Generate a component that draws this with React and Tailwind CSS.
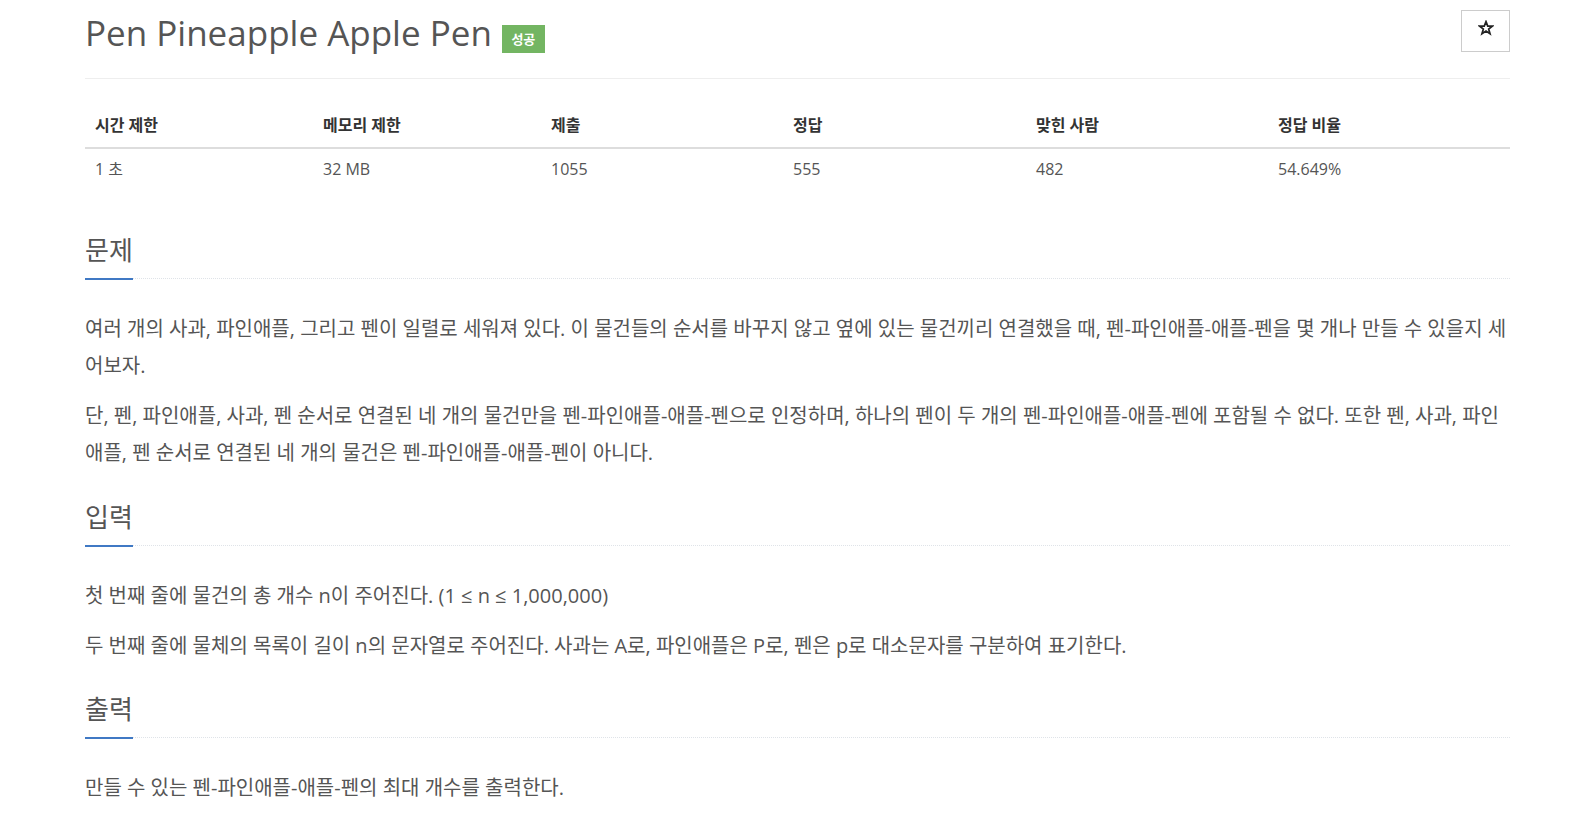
import React from "react";

const FONT = { fontFamily: '"Open Sans", "Noto Sans CJK KR", sans-serif' };

function Headline({ children }) {
  return (
    <div className="flex border-b border-dotted border-[#dfe3e8] mb-[31px]">
      <h2 className="text-[26px] leading-[30px] font-normal text-[#555] pb-[13px] border-b-2 border-[#4079c4] -mb-[2px]">
        {children}
      </h2>
    </div>
  );
}

function P({ children }) {
  return <p className="text-[20px] leading-[37px] text-[#555] mb-[13px]">{children}</p>;
}

export default function App() {
  const heads = ["시간 제한", "메모리 제한", "제출", "정답", "맞힌 사람", "정답 비율"];
  const vals = ["1 초", "32 MB", "1055", "555", "482", "54.649%"];
  const widths = ["w-[228px]", "w-[228px]", "w-[242px]", "w-[243px]", "w-[242px]", "w-[242px]"];
  return (
    <div className="bg-white min-h-[823px]" style={FONT}>
      <div className="ml-[85px] w-[1425px]">
        <div className="flex justify-between items-start pt-[10px] pb-[25px] border-b border-[#eee]">
          <h1 className="flex items-center mt-[2px] text-[35px] leading-[36px] font-normal text-[#555]">
            <span>Pen Pineapple Apple Pen</span>
            <span className="ml-[10px] mt-[13px] w-[43px] h-[28px] flex items-center justify-center bg-[#73b562] text-white text-[13px] font-bold">
              성공
            </span>
          </h1>
          <button className="w-[49px] h-[42px] border border-[#ccc] bg-white flex items-center justify-center pb-[6px]">
            <svg width="16" height="16" viewBox="0 0 24 24" fill="none" stroke="#222" strokeWidth="2.6" strokeLinejoin="miter">
              <polygon points="12,2.5 14.6,9.2 21.6,9.2 16,13.6 18,20.6 12,16.4 6,20.6 8,13.6 2.4,9.2 9.4,9.2" />
            </svg>
          </button>
        </div>

        <table className="mt-[28px] w-[1425px] border-collapse table-fixed">
          <thead>
            <tr>
              {heads.map((h, i) => (
                <th key={h} className={`${widths[i]} text-left px-[10px] pt-[8px] pb-[12px] text-[16px] leading-[20px] font-bold text-[#333] border-b-2 border-[#ddd]`}>
                  {h}
                </th>
              ))}
            </tr>
          </thead>
          <tbody>
            <tr>
              {vals.map((v) => (
                <td key={v} className="px-[10px] pt-[10px] pb-[8px] text-[16px] leading-[20px] text-[#555]">
                  {v}
                </td>
              ))}
            </tr>
          </tbody>
        </table>

        <section className="mt-[48px]">
          <Headline>문제</Headline>
          <P>
            여러 개의 사과, 파인애플, 그리고 펜이 일렬로 세워져 있다. 이 물건들의 순서를 바꾸지 않고 옆에 있는 물건끼리 연결했을 때, 펜-파인애플-애플-펜을 몇 개나 만들 수 있을지 세어보자.
          </P>
          <P>
            단, 펜, 파인애플, 사과, 펜 순서로 연결된 네 개의 물건만을 펜-파인애플-애플-펜으로 인정하며, 하나의 펜이 두 개의 펜-파인애플-애플-펜에 포함될 수 없다. 또한 펜, 사과, 파인애플, 펜 순서로 연결된 네 개의 물건은 펜-파인애플-애플-펜이 아니다.
          </P>
        </section>

        <section className="mt-[31px]">
          <Headline>입력</Headline>
          <P>첫 번째 줄에 물건의 총 개수 n이 주어진다. (1 ≤ n ≤ 1,000,000)</P>
          <P>두 번째 줄에 물체의 목록이 길이 n의 문자열로 주어진다. 사과는 A로, 파인애플은 P로, 펜은 p로 대소문자를 구분하여 표기한다.</P>
        </section>

        <section className="mt-[30px]">
          <Headline>출력</Headline>
          <P>만들 수 있는 펜-파인애플-애플-펜의 최대 개수를 출력한다.</P>
        </section>
      </div>
    </div>
  );
}
